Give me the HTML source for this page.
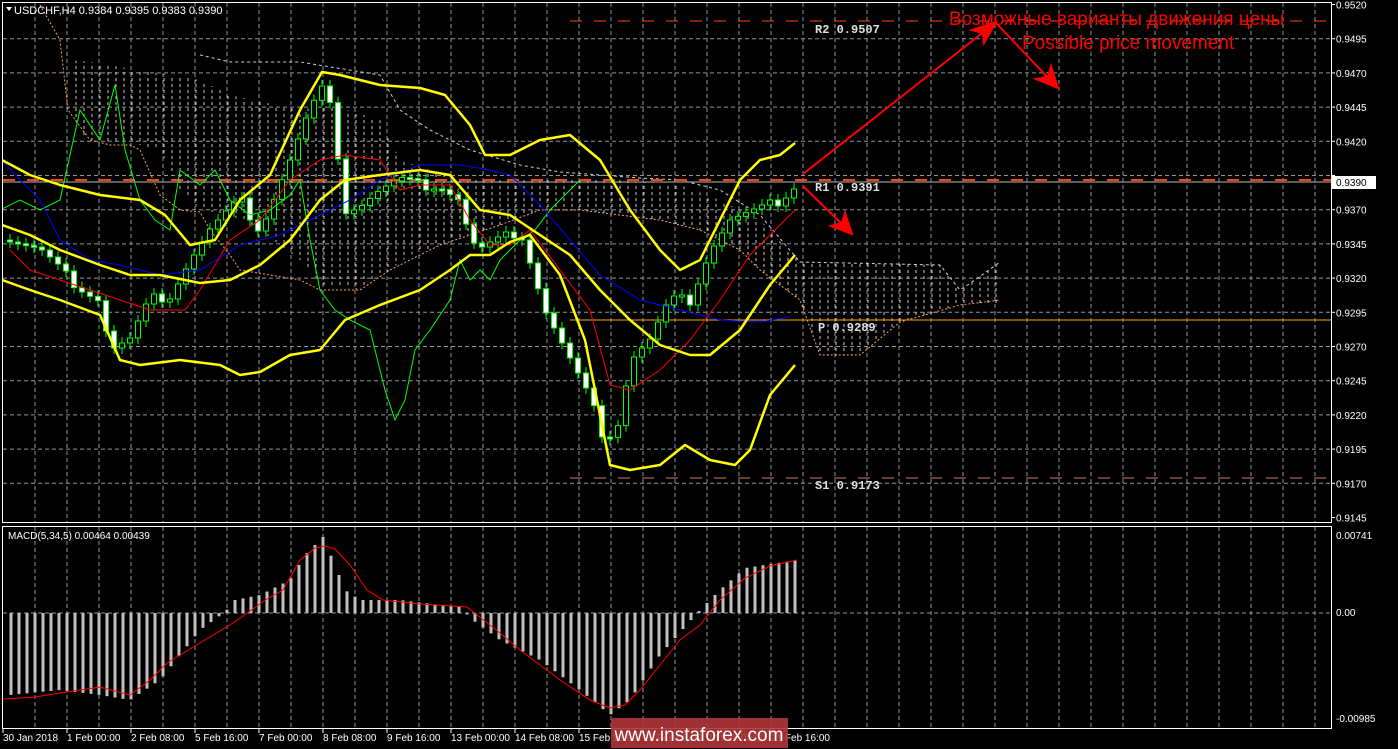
<!DOCTYPE html>
<html><head><meta charset="utf-8"><style>
html,body{margin:0;padding:0;background:#000;width:1398px;height:749px;overflow:hidden}
svg{display:block}
text{font-family:"Liberation Sans",sans-serif}
text.mono{font-family:"Liberation Mono",monospace;font-weight:bold;font-size:12px}
</style></head><body>
<svg id="s" width="1398" height="749" xmlns="http://www.w3.org/2000/svg">
<defs>
<pattern id="hatch" width="8" height="6" patternUnits="userSpaceOnUse">
<line x1="4" y1="0" x2="4" y2="3" stroke="#c8c8c8" stroke-width="1"/>
</pattern>
<clipPath id="mainclip"><rect x="3" y="3" width="1328" height="519"/></clipPath>
<clipPath id="macdclip"><rect x="3" y="527" width="1328" height="200"/></clipPath>
</defs>
<rect width="1398" height="749" fill="#000"/>
<g id="grid" stroke="#8c96a0" stroke-width="1" stroke-dasharray="4,3"></g>
<g clip-path="url(#mainclip)">
<polygon fill="url(#hatch)" points="70,60 90,62 200,80 230,95 300,110 330,105 380,120 400,160 430,170 470,180 520,180 560,178 600,178 640,182 680,185 720,200 760,220 800,262 940,265 960,290 975,280 1000,262 1000,305 960,305 900,322 860,355 820,355 800,300 760,270 740,250 700,230 660,220 620,215 580,210 540,210 500,225 470,235 440,245 410,255 390,270 360,290 320,285 300,260 260,230 230,215 200,210 180,190 160,150 140,145 100,140 85,140 70,110"/>
<polyline fill="none" stroke="#d0d0d0" stroke-width="1" stroke-dasharray="3,3" points="200,55 230,62 300,62 380,75 400,110 430,130 470,150 520,165 560,172 600,175 640,178 680,180 720,190 760,215 800,262 940,265 960,290 975,280 1000,262"/>
<polyline fill="none" stroke="#f4a460" stroke-width="1" stroke-dasharray="2,2" points="40,5 60,40 68,110 90,140 110,145 130,145 140,150 160,195 180,210 200,212 210,230 230,255 240,270 300,280 320,290 360,290 390,270 440,245 500,225 540,210 580,210 620,215 660,220 700,230 740,250 760,270 800,300 820,355 860,355 900,322 960,305 1000,300"/>
<line x1="3" y1="182" x2="1331" y2="182" stroke="#b4b4b4" stroke-width="1"/>
<line x1="570" y1="21" x2="1331" y2="21" stroke="#ff4500" stroke-width="1" stroke-dasharray="12,12"/>
<line x1="3" y1="180" x2="1331" y2="180" stroke="#ff4500" stroke-width="2" stroke-dasharray="12,12"/>
<line x1="570" y1="320" x2="1331" y2="320" stroke="#ffa500" stroke-width="1"/>
<line x1="570" y1="478" x2="1331" y2="478" stroke="#cc8060" stroke-width="1" stroke-dasharray="12,12"/>
<g id="candles"></g>
<polyline fill="none" stroke="#00ff00" stroke-width="1" points="0,210 20,200 40,210 60,200 80,110 100,140 115,85 125,150 140,200 155,220 170,230 180,170 200,185 215,170 230,200 250,215 270,210 290,195 300,180 310,240 320,290 335,310 350,320 370,330 385,390 395,420 405,400 415,350 430,330 450,300 460,260 470,280 480,270 490,280 500,260 510,250 520,240 535,230 550,210 570,190 580,180"/>
<polyline fill="none" stroke="#0000ff" stroke-width="1" points="2,160 20,180 40,200 60,240 90,260 120,265 160,275 200,270 240,245 280,235 320,215 350,200 380,180 420,165 460,165 490,170 510,175 540,205 570,240 600,275 640,300 680,310 720,320 760,322 790,317"/>
<polyline fill="none" stroke="#ff0000" stroke-width="1" points="10,250 30,270 60,280 120,300 150,310 185,310 200,290 230,240 260,220 290,180 320,160 345,155 380,160 400,190 420,185 450,185 470,220 490,245 510,245 530,230 560,270 590,310 610,385 630,390 660,370 690,340 720,300 750,255 770,235 795,210"/>
<g fill="none" stroke="#ffff00" stroke-width="2.5" stroke-linejoin="round">
<polyline points="2,160 30,175 60,185 100,195 140,200 165,215 190,245 215,240 240,200 270,175 300,110 322,72 340,75 380,85 420,88 445,95 470,125 485,155 510,155 540,140 570,135 600,160 630,210 660,250 680,270 700,260 720,220 740,180 760,160 780,155 795,143"/>
<polyline points="2,225 30,235 60,250 100,265 130,275 160,275 200,283 230,280 260,265 290,240 320,200 345,180 380,175 420,170 450,175 480,210 510,215 540,235 570,255 600,290 630,320 660,345 690,355 710,355 740,330 770,285 795,255"/>
<polyline points="2,280 30,290 60,300 100,315 120,360 140,365 180,360 220,365 240,375 260,372 290,355 320,350 345,320 380,305 420,290 450,270 470,255 490,255 510,242 530,235 560,275 585,340 610,465 630,470 660,465 685,445 710,460 735,465 750,450 770,395 795,365"/>
</g>
<g stroke="#ff0000" stroke-width="2" fill="#ff0000">
<line x1="803" y1="174" x2="990" y2="27"/>
<polygon points="996,22 972,30 983,33 984,43" />
<line x1="996" y1="23" x2="1054" y2="84"/>
<polygon points="1058,88 1051,66 1048,77 1036,79"/>
<line x1="803" y1="186" x2="848" y2="230"/>
<polygon points="852,234 845,213 842,223 831,226"/>
</g>
<text x="949" y="25" fill="#ff0000" font-size="19">Возможные варианты движения цены</text>
<text x="1022" y="49" fill="#ff0000" font-size="19">Possible price movement</text>
<g fill="#e0e0e0">
<text class="mono" x="815" y="33">R2 0.9507</text>
<text class="mono" x="815" y="191">R1 0.9391</text>
<text class="mono" x="818" y="331">P 0.9289</text>
<text class="mono" x="815" y="489">S1 0.9173</text>
</g>
</g>
<g clip-path="url(#macdclip)">
<line x1="3" y1="613" x2="1331" y2="613" stroke="#8c96a0" stroke-dasharray="4,3"/>
<g id="bars" fill="#c0c0c0"></g>
<polyline fill="none" stroke="#ff0000" stroke-width="1" points="3,699 35,697 60,693 100,687 130,695 150,680 167,663 200,643 233,623 267,599 283,590 300,560 315,548 325,546 335,549 350,565 367,590 383,600 420,604 467,607 500,633 520,650 540,665 560,680 590,700 610,708 625,705 640,690 660,665 680,640 700,625 720,600 745,578 770,566 797,560"/>
</g>
<rect x="2.5" y="2.5" width="1329" height="520" fill="none" stroke="#fff" stroke-width="1"/>
<rect x="2.5" y="526.5" width="1329" height="202" fill="none" stroke="#fff" stroke-width="1"/>
<text x="14" y="14" fill="#fff" font-size="11">USDCHF,H4  0.9384 0.9395 0.9383 0.9390</text>
<polygon points="6,7 12,7 9,11" fill="#fff"/>
<text x="8" y="539" fill="#fff" font-size="10">MACD(5,34,5) 0.00464 0.00439</text>
<g id="yaxis" fill="#fff" font-size="10"></g>
<rect x="1332" y="176" width="44" height="13" fill="#fff"/>
<text x="1336" y="186" fill="#000" font-size="10">0.9390</text>
<text x="1336" y="539" fill="#fff" font-size="10">0.00741</text>
<text x="1336" y="616" fill="#fff" font-size="10">0.00</text>
<text x="1336" y="722" fill="#fff" font-size="10">-0.00985</text>
<g id="xaxis" fill="#fff" font-size="10"></g>
<rect x="611" y="718" width="177" height="30" fill="#b03538" opacity="0.9"/>
<text x="699" y="741" fill="#fff" font-size="19" text-anchor="middle">www.instaforex.com</text>
</svg>
<script>
(function(){
var NS="http://www.w3.org/2000/svg";
function el(p,t,a){var e=document.createElementNS(NS,t);for(var k in a)e.setAttribute(k,a[k]);document.getElementById(p).appendChild(e);return e;}
for(var x=35;x<1331;x+=32){el("grid","line",{x1:x,y1:3,x2:x,y2:522});el("grid","line",{x1:x,y1:527,x2:x,y2:728});}
var prices=["0.9520","0.9495","0.9470","0.9445","0.9420","0.9395","0.9370","0.9345","0.9320","0.9295","0.9270","0.9245","0.9220","0.9195","0.9170","0.9145"];
for(var i=0;i<16;i++){var y=4.5+i*34.2;if(i>0&&i<15)el("grid","line",{x1:3,y1:y,x2:1331,y2:y});
 el("yaxis","line",{x1:1331,y1:y,x2:1335,y2:y,stroke:"#fff"});
 if(i!=5){var t=el("yaxis","text",{x:1336,y:y+4});t.textContent=prices[i];}}
var xl=[[3,"30 Jan 2018"],[67,"1 Feb 00:00"],[131,"2 Feb 08:00"],[195,"5 Feb 16:00"],[259,"7 Feb 00:00"],[323,"8 Feb 08:00"],[387,"9 Feb 16:00"],[451,"13 Feb 00:00"],[515,"14 Feb 08:00"],[579,"15 Feb 16:00"],[643,"19 Feb 00:00"],[707,"20 Feb 08:00"],[771,"21 Feb 16:00"]];
xl.forEach(function(a){var t=el("xaxis","text",{x:a[0],y:741});t.textContent=a[1];el("xaxis","line",{x1:a[0],y1:729,x2:a[0],y2:733,stroke:"#fff"});});
function interp(pts,x){for(var i=0;i<pts.length-1;i++){if(x>=pts[i][0]&&x<=pts[i+1][0]){var f=(x-pts[i][0])/(pts[i+1][0]-pts[i][0]);return pts[i][1]+f*(pts[i+1][1]-pts[i][1]);}}return pts[0][1];}
var pp=[[10,240],[40,250],[70,280],[100,300],[110,350],[130,340],[150,300],[170,295],[190,260],[210,230],[240,200],[260,230],[290,160],[310,110],[325,85],[335,130],[345,210],[360,205],[380,190],[400,180],[420,185],[440,185],[460,200],[470,240],[480,250],[500,240],[520,230],[530,260],[545,310],[560,340],[575,370],[590,400],[605,440],[620,420],[630,360],[650,340],[670,300],[690,300],[710,250],[730,220],[760,210],[780,200],[795,185]];
var prev=240;
for(var x=10;x<=795;x+=8){var c=interp(pp,x)+((x*37)%11-5);var o=prev;var tp=Math.min(o,c),bt=Math.max(o,c);if(bt-tp<2)bt=tp+2;
 el("candles","line",{x1:x,y1:tp-6,x2:x,y2:bt+6,stroke:"#00ff00"});
 el("candles","rect",{x:x-2.5,y:tp,width:5,height:bt-tp,fill:c<o?"#000":"#fff",stroke:"#00ff00","stroke-width":1});prev=c;}
var hp=[[10,695],[60,690],[100,695],[130,700],[160,680],[200,630],[225,612],[235,600],[260,595],[290,580],[305,555],[323,537],[335,565],[345,590],[360,600],[400,600],[440,605],[460,606],[470,618],[500,640],[540,660],[580,690],[610,715],[630,700],[660,655],[700,610],[720,590],[745,568],[797,560]];
for(var x=11;x<=797;x+=8){var v=interp(hp,x);var tp=Math.min(v,613),h=Math.abs(v-613);el("bars","rect",{x:x-1.5,y:tp,width:3,height:Math.max(h,1)});}
})();
</script>
</body></html>
